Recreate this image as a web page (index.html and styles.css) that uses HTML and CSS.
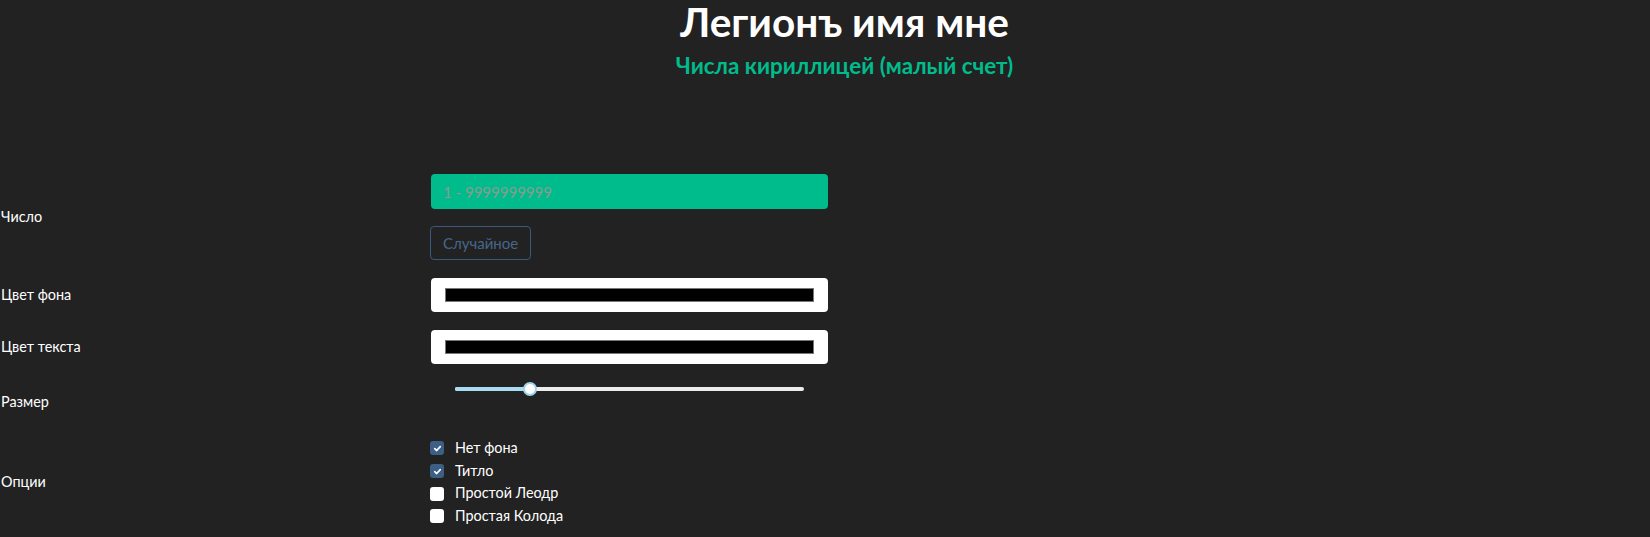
FILE: index.html
```html
<!DOCTYPE html>
<html lang="ru">
<head>
<meta charset="utf-8">
<title>Легионъ имя мне</title>
<link rel="stylesheet" href="styles.css">
</head>
<body>
<header class="head">
  <h1 class="title">Легионъ имя мне</h1>
  <h2 class="subtitle">Числа кириллицей (малый счет)</h2>
</header>
<form class="form">
  <div class="row row-number">
    <label class="lbl" for="num">Число</label>
    <div class="ctl">
      <input id="num" class="num-input" type="text" placeholder="1 - 9999999999">
      <button type="button" class="btn-rand">Случайное</button>
    </div>
  </div>
  <div class="row row-color">
    <span class="lbl">Цвет фона</span>
    <div class="ctl"><div class="color-box"><div class="swatch"></div></div></div>
  </div>
  <div class="row row-color2">
    <span class="lbl">Цвет текста</span>
    <div class="ctl"><div class="color-box"><div class="swatch"></div></div></div>
  </div>
  <div class="row row-size">
    <span class="lbl">Размер</span>
    <div class="ctl ctl-top">
      <div class="range">
        <div class="track"><div class="fill" style="width:75px"></div></div>
        <div class="thumb" style="left:68px"></div>
      </div>
    </div>
  </div>
  <div class="row row-opts">
    <span class="lbl">Опции</span>
    <div class="ctl checks">
      <label class="check"><span class="box on"><svg viewBox="0 0 12 12" width="12" height="12"><path d="M3 6.2 L5.1 8.2 L9 4" fill="none" stroke="#fff" stroke-width="1.9" stroke-linecap="round" stroke-linejoin="round"/></svg></span>Нет фона</label>
      <label class="check"><span class="box on"><svg viewBox="0 0 12 12" width="12" height="12"><path d="M3 6.2 L5.1 8.2 L9 4" fill="none" stroke="#fff" stroke-width="1.9" stroke-linecap="round" stroke-linejoin="round"/></svg></span>Титло</label>
      <label class="check"><span class="box"></span>Простой Леодр</label>
      <label class="check"><span class="box"></span>Простая Колода</label>
    </div>
  </div>
</form>
</body>
</html>
```
FILE: styles.css
```css
html, body {
  margin: 0;
  padding: 0;
  background: #222222;
  color: #ffffff;
  font-family: Lato, "Noto Sans", sans-serif;
  font-size: 15px;
  line-height: 1.42857;
}
.head {
  padding-left: 39px;
  text-align: center;
}
.title {
  margin: 0;
  font-size: 40.5px;
  line-height: 1.1;
  font-weight: 700;
  color: #ffffff;
}
.subtitle {
  margin: 9px 0 0;
  font-size: 22.4px;
  line-height: 1.1;
  font-weight: 700;
  color: #00bc8c;
}
.form {
  margin-top: 96px;
  display: flex;
  flex-direction: column;
}
.row {
  display: grid;
  grid-template-columns: 430px 398px;
  align-items: center;
}
.row-color { margin-top: 18px; }
.row-color2 { margin-top: 18px; }
.row-size { margin-top: 18px; height: 41px; }
.row-opts { margin-top: 14px; }
.lbl {
  padding-left: 1px;
  font-size: 14.4px;
}
.ctl {
  display: flex;
  flex-direction: column;
  align-items: flex-start;
}
.ctl-top { align-self: start; }
.num-input {
  box-sizing: border-box;
  width: 397px;
  height: 35px;
  margin-left: 1px;
  padding: 6px 12px;
  border: 0;
  border-radius: 4px;
  background: #00bc8c;
  color: #fff;
  font-family: inherit;
  font-size: 15px;
  outline: none;
}
.num-input::placeholder { color: #8a9a92; }
.btn-rand {
  margin-top: 17px;
  box-sizing: border-box;
  height: 34px;
  padding: 6px 12px;
  border: 1px solid #375a7f;
  border-radius: 4px;
  background: transparent;
  color: #46678c;
  font-family: inherit;
  font-size: 15px;
  line-height: 20px;
}
.color-box {
  box-sizing: border-box;
  width: 397px;
  height: 34px;
  margin-left: 1px;
  padding: 10px 14px;
  background: #ffffff;
  border-radius: 4px;
}
.swatch {
  box-sizing: border-box;
  height: 100%;
  background: #000;
  border: 1px solid #777;
}
.range {
  position: relative;
  margin-left: 25px;
  width: 349px;
  height: 14px;
}
.track {
  position: absolute;
  left: 0;
  right: 0;
  top: 5px;
  height: 4px;
  border-radius: 2px;
  background: #ececec;
  overflow: hidden;
}
.fill {
  height: 100%;
  background: #a8dbf4;
}
.thumb {
  position: absolute;
  top: 0;
  box-sizing: border-box;
  width: 14px;
  height: 14px;
  border-radius: 50%;
  background: #ffffff;
  border: 2px solid #9fd1ea;
}
.check {
  display: flex;
  align-items: center;
  height: 22.6px;
  font-size: 14.4px;
}
.box {
  box-sizing: border-box;
  width: 14px;
  height: 14px;
  margin-right: 11px;
  border-radius: 3px;
  background: #ffffff;
  display: flex;
  align-items: center;
  justify-content: center;
}
.box.on { background: #3c5f86; }
.box svg { width: 11px; height: 11px; }
```
